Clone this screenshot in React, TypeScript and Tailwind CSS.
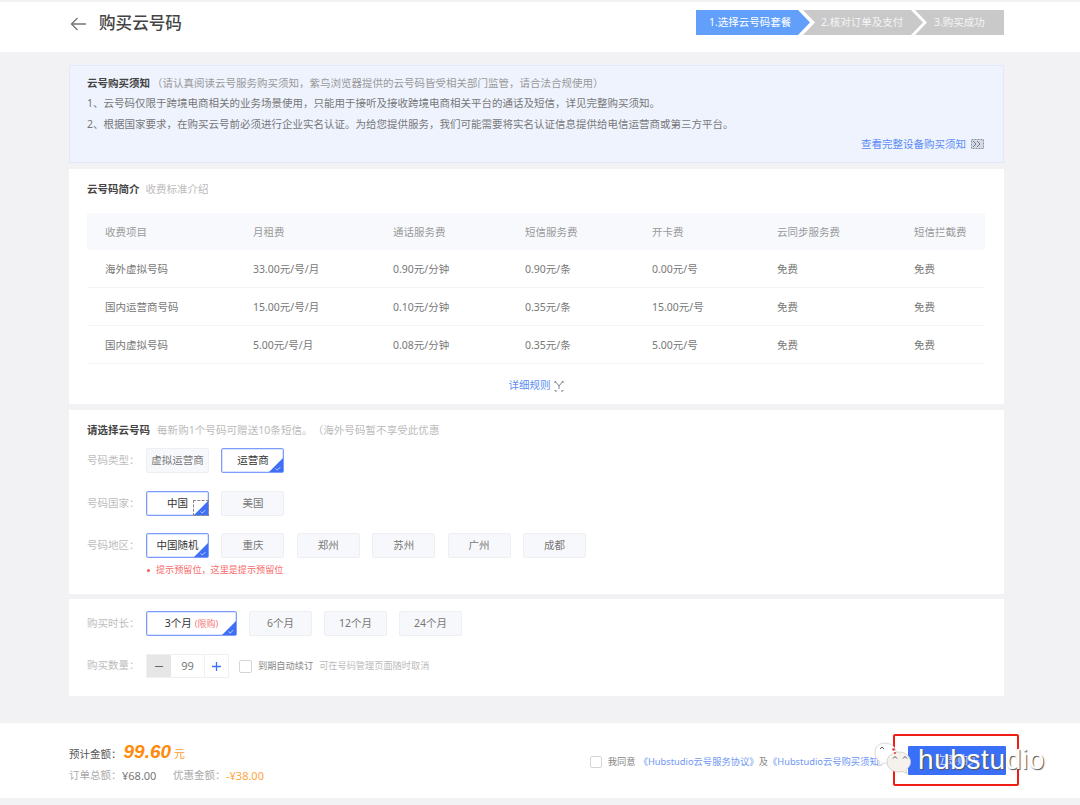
import React from "react";

function Corner() {
  return (
    <svg className="absolute right-0 bottom-0" width="14" height="14" viewBox="0 0 14 14">
      <path d="M14 0V14H0Z" fill="#3f6ff5" />
      <path d="M6.5 10.5l1.8 1.6 3-3" fill="none" stroke="#dfe8ff" strokeWidth="0.8" />
    </svg>
  );
}

function Opt({ label, active, w = "w-[63px]", children }: { label?: string; active?: boolean; w?: string; children?: React.ReactNode }) {
  return (
    <div
      className={
        "relative h-[25px] shrink-0 flex items-center justify-center rounded-[2px] text-[10.5px] border " +
        w +
        " " +
        (active
          ? "bg-white border-[#7c9dfb] text-[#333] shadow-[inset_0_0_0_1px_#d9e3fe]"
          : "bg-[#f7f8fb] border-[#eeeff2] text-[#777]")
      }
    >
      {label}
      {children}
      {active && <Corner />}
    </div>
  );
}

function Row({ label, mb, children }: { label: string; mb: string; children: React.ReactNode }) {
  return (
    <div className={"flex items-center " + mb}>
      <div className="w-[59px] shrink-0 text-[10.5px] text-[#bdbdbd]">{label}</div>
      {children}
    </div>
  );
}

const cols = ["w-[148px]", "w-[140px]", "w-[132px]", "w-[127px]", "w-[125px]", "w-[137px]", "w-[71px]"];
const rows = [
  ["海外虚拟号码", "33.00元/号/月", "0.90元/分钟", "0.90元/条", "0.00元/号", "免费", "免费"],
  ["国内运营商号码", "15.00元/号/月", "0.10元/分钟", "0.35元/条", "15.00元/号", "免费", "免费"],
  ["国内虚拟号码", "5.00元/号/月", "0.08元/分钟", "0.35元/条", "5.00元/号", "免费", "免费"],
];
const heads = ["收费项目", "月租费", "通话服务费", "短信服务费", "开卡费", "云同步服务费", "短信拦截费"];

export default function App() {
  return (
    <div className="relative w-[1080px] h-[805px] overflow-hidden bg-[#f2f2f5] pt-[2px] font-['Noto_Sans','Noto_Sans_CJK_SC',sans-serif] text-[#666] [text-spacing-trim:space-all]">
      {/* header */}
      <div className="h-[50px] bg-white flex items-start pl-[70px] pr-[76px]">
        <svg className="mt-[15px]" width="17" height="14" viewBox="0 0 17 14" fill="none" stroke="#777" strokeWidth="1.4">
          <path d="M16 7H1.5M7.5 1L1.5 7l6 6" />
        </svg>
        <div className="ml-[12px] mt-[9px] text-[16.6px] leading-[24px] text-[#444] font-medium">购买云号码</div>
        <div className="ml-auto flex mt-[8px] text-[10.5px] text-white/80">
          <div className="w-[114px] h-[25px] pl-[13px] flex items-center bg-[#619ffb] text-white [clip-path:polygon(0_0,calc(100%-12px)_0,100%_50%,calc(100%-12px)_100%,0_100%)]">1.选择云号码套餐</div>
          <div className="-ml-[7px] w-[120px] h-[25px] pl-[18px] flex items-center bg-[#c9c9c9] [clip-path:polygon(0_0,calc(100%-12px)_0,100%_50%,calc(100%-12px)_100%,0_100%,12px_50%)]">2.核对订单及支付</div>
          <div className="-ml-[8px] w-[89px] h-[25px] pl-[19px] flex items-center bg-[#c9c9c9] [clip-path:polygon(0_0,100%_0,100%_100%,0_100%,12px_50%)]">3.购买成功</div>
        </div>
      </div>

      <div className="ml-[69px] w-[935px] mt-[13px]">
        {/* notice */}
        <div className="relative h-[98px] bg-[#eef3fe] border border-[#e2e9fb] pl-[17px] pt-[7px] text-[10.5px] leading-[20.4px] text-[#777]">
          <div>
            <span className="font-bold text-[#444]">云号购买须知</span>
            <span className="ml-[2px] text-[#999]">（请认真阅读云号服务购买须知，紫鸟浏览器提供的云号码皆受相关部门监管，请合法合规使用）</span>
          </div>
          <div>1、云号码仅限于跨境电商相关的业务场景使用，只能用于接听及接收跨境电商相关平台的通话及短信，详见完整购买须知。</div>
          <div>2、根据国家要求，在购买云号前必须进行企业实名认证。为给您提供服务，我们可能需要将实名认证信息提供给电信运营商或第三方平台。</div>
          <div className="flex items-center justify-end pr-[19px] text-[#5b8cf5]">
            查看完整设备购买须知
            <svg className="ml-[5px]" width="13" height="10" viewBox="0 0 13 10" fill="none" stroke="#8a93a6" strokeWidth="1">
              <path d="M.5.5h12v9H.5z" fill="#d5d9e4" strokeDasharray="2 1" />
              <path d="M2 2l3 3-3 3M6 2l3 3-3 3" stroke="#6f7890" />
            </svg>
          </div>
        </div>

        {/* table card */}
        <div className="mt-[6px] h-[235px] bg-white px-[18px]">
          <div className="h-[44px] pt-[11px] text-[10.5px] leading-[18px]">
            <span className="font-bold text-[#444]">云号码简介</span>
            <span className="ml-[6px] text-[#bbb]">收费标准介绍</span>
          </div>
          <div className="w-[898px] text-[10.5px]">
            <div className="flex items-center h-[37px] bg-[#f8f9fd] pl-[18px] pt-[2px] text-[#999]">
              {heads.map((h, i) => (
                <div key={h} className={cols[i]}>{h}</div>
              ))}
            </div>
            {rows.map((r) => (
              <div key={r[0]} className="flex items-center h-[38px] pl-[18px] pt-[2px] border-b border-[#f3f3f5] text-[#777]">
                {r.map((c, i) => (
                  <div key={i} className={cols[i]}>{c}</div>
                ))}
              </div>
            ))}
          </div>
          <div className="flex items-center justify-center pt-[13px] text-[10.5px] leading-[16px] text-[#5b8cf5] pr-[1px]">
            详细规则
            <svg className="ml-[3px] mt-[2px]" width="10" height="12" viewBox="0 0 10 12" fill="none" stroke="#7a8296" strokeWidth="1">
              <path d="M1 1l4 5 4-5M5 6v3M1 1v2M9 1v2M1 10v1h2M7 11h2v-1" />
            </svg>
          </div>
        </div>

        {/* choose */}
        <div className="mt-[6px] h-[184px] bg-white pl-[18px] pt-[11px]">
          <div className="text-[10.5px] leading-[18px] mb-[9px]">
            <span className="font-bold text-[#444]">请选择云号码</span>
            <span className="ml-[7px] tracking-[0.07px] text-[#bbb]">每新购1个号码可赠送10条短信。（海外号码暂不享受此优惠</span>
          </div>
          <Row label="号码类型：" mb="mb-[18px]">
            <div className="flex gap-[12.4px]">
              <Opt label="虚拟运营商" />
              <Opt label="运营商" active />
            </div>
          </Row>
          <Row label="号码国家：" mb="mb-[17px]">
            <div className="flex gap-[12.4px]">
              <Opt label="中国" active>
                <div className="absolute right-[-1px] bottom-[-1px] w-[16px] h-[16px] border border-dashed border-[#888]" />
              </Opt>
              <Opt label="美国" />
            </div>
          </Row>
          <Row label="号码地区：" mb="mb-[5px]">
            <div className="flex gap-[12.4px]">
              <Opt label="中国随机" active />
              <Opt label="重庆" />
              <Opt label="郑州" />
              <Opt label="苏州" />
              <Opt label="广州" />
              <Opt label="成都" />
            </div>
          </Row>
          <div className="ml-[59px] pl-[1px] flex items-center text-[9.1px] leading-[14px] text-[#f76a6a]">
            <span className="w-[3px] h-[3px] rounded-full bg-[#f55] mr-[6px]" />
            提示预留位，这里是提示预留位
          </div>
        </div>

        {/* duration */}
        <div className="mt-[5px] h-[97px] bg-white pl-[18px] pt-[12px]">
          <Row label="购买时长：" mb="mb-[18px]">
            <div className="flex gap-[12px]">
              <Opt active w="w-[91px]">
                3个月<span className="ml-[3px] text-[9px] text-[#f47a7a]">(限购)</span>
              </Opt>
              <Opt label="6个月" />
              <Opt label="12个月" />
              <Opt label="24个月" />
            </div>
          </Row>
          <Row label="购买数量：" mb="">
            <div className="flex h-[24px] w-[83px] border border-[#f0f0f2] text-[11px]">
              <div className="w-[24px] bg-[#e6e6e6] flex items-center justify-center text-[#666]">
                <div className="w-[8px] h-[1px] bg-[#666]" />
              </div>
              <div className="flex-1 flex items-center justify-center text-[#777]">99</div>
              <div className="w-[24px] border-l border-[#f0f0f2] flex items-center justify-center">
                <svg width="9" height="9" viewBox="0 0 9 9" stroke="#3a6ff7" strokeWidth="1.3"><path d="M0 4.5h9M4.5 0v9" /></svg>
              </div>
            </div>
            <div className="ml-[10px] w-[13px] h-[13px] rounded-[2px] border border-[#d5d5d5] bg-white" />
            <div className="ml-[6px] text-[9.2px] text-[#888]">到期自动续订</div>
            <div className="ml-[6px] text-[9.2px] text-[#bbb]">可在号码管理页面随时取消</div>
          </Row>
        </div>
      </div>

      {/* footer */}
      <div className="mt-[27px] h-[75px] bg-white flex items-center pl-[69px]">
        <div>
          <div className="flex items-baseline h-[26px] text-[10.5px] text-[#555]">
            预计金额：
            <span className="ml-[2px] text-[19px] font-bold italic text-[#ff8a0d] font-['Liberation_Sans',sans-serif]">99.60</span>
            <span className="ml-[3px] text-[11px] text-[#ff9a2e]">元</span>
          </div>
          <div className="mt-[3px] flex text-[10.5px] leading-[17px] text-[#aaa]">
            <span className="w-[53px]">订单总额：</span>
            <span className="w-[33px] text-[11px] text-[#777]">¥68.00</span>
            <span className="ml-[18px] w-[53px]">优惠金额：</span>
            <span className="text-[11px] text-[#ffa63e]">-¥38.00</span>
          </div>
        </div>
        <div className="ml-auto mt-[2px] flex items-center text-[9.3px] text-[#888]">
          <div className="w-[12px] h-[12px] rounded-[2px] border border-[#d5d5d5] mr-[6px]" />
          我同意
          <span className="ml-[3px] text-[#6f97f5]">《Hubstudio云号服务协议》</span>
          及
          <span className="text-[#6f97f5]">《Hubstudio云号购买须知》</span>
        </div>
        <div className="ml-[20px] mr-[74px] w-[98px] h-[29px] bg-[#3a6ff7] rounded-[1px] flex items-center justify-center text-[11px] text-[#cfdcff]">立即购买</div>
      </div>

      {/* overlays */}
      <div className="absolute left-[893px] top-[734px] w-[126px] h-[52px] border-[2px] border-[#f01d14] rounded-[2px]" />
      <svg className="absolute left-[872px] top-[741px]" width="42" height="36" viewBox="0 0 42 36">
        <path d="M13 2C7 2 3 6 3 12c0 4 2 7 5 8.500l-1.500 4.500 5.500-3c4 .8 9 0 11-3 4-7 0-17-10-17z" fill="#fff" stroke="#cfcfcf" strokeWidth="0.8" />
        <path d="M27 11c-7 0-12 4.500-12 10s5 10 12 10c1.500 0 3-.2 4-.6l4 2.600-1-4.500c3-2 4.500-4.500 4.500-7.500 0-5.500-5-10-11.500-10z" fill="#f5f2ee" stroke="#cfcbc7" strokeWidth="0.8" />
        <path d="M8 8l2-2 2 2M21 17.500l2-2 2 2M31 17.500l2-2 2 2" fill="none" stroke="#444" strokeWidth="0.9" />
        <circle cx="21.500" cy="8.500" r="1.300" fill="#e03030" />
        <circle cx="23" cy="12" r="0.900" fill="#e03030" />
      </svg>
      <div className="absolute left-[918px] top-[742px] text-[28px] leading-[36px] tracking-[0.6px] text-white font-['Liberation_Sans',sans-serif] [text-shadow:1px_1px_1px_#555]">
        hubstudio
      </div>
    </div>
  );
}
